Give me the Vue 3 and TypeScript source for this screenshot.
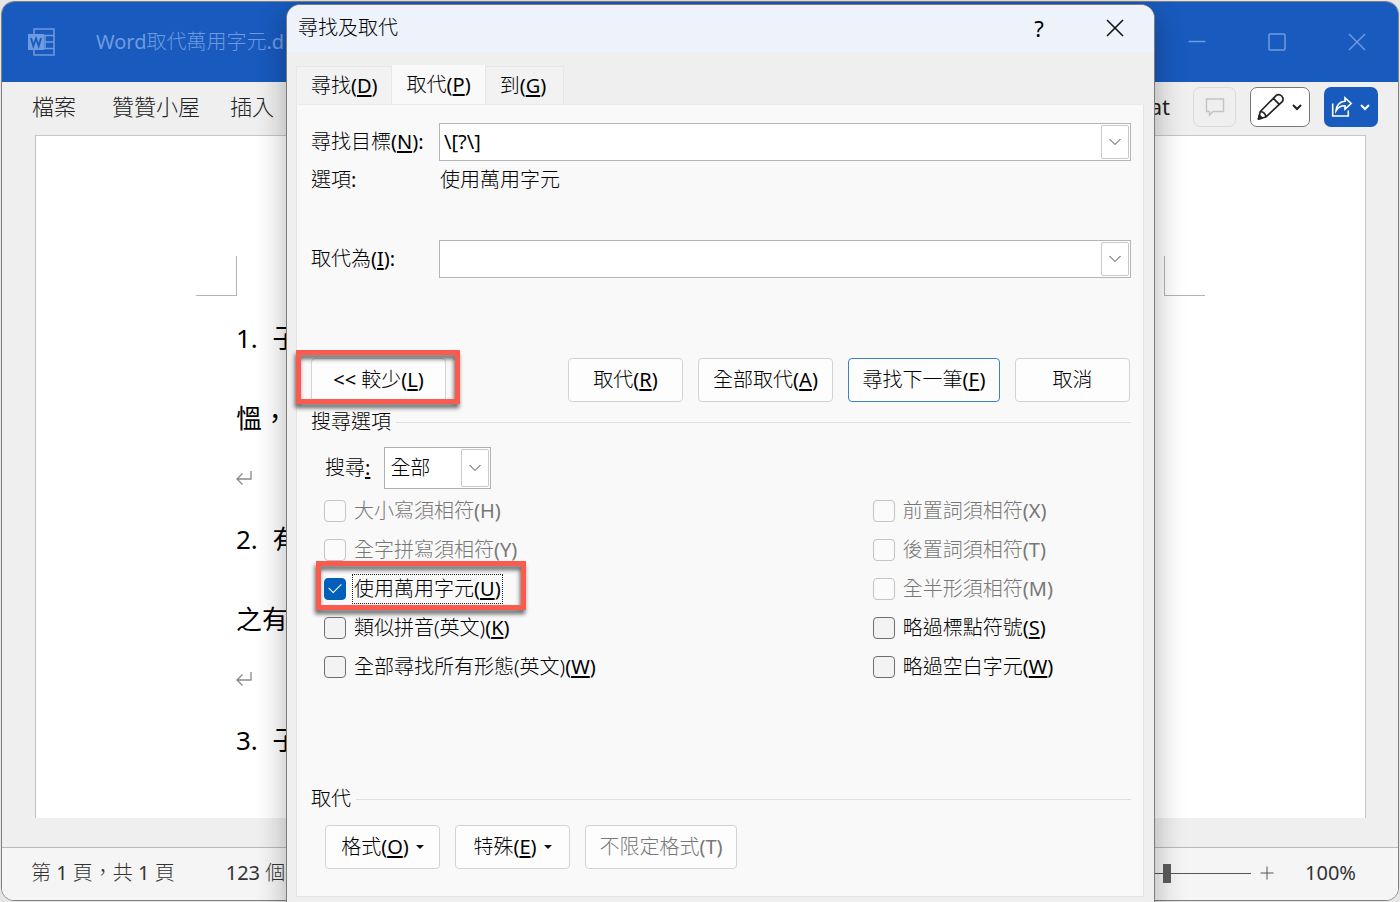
<script setup lang="ts">
import { ref } from 'vue'

interface CheckOption {
  id: string
  text: string
  key: string
  disabled?: boolean
  focused?: boolean
}

const menuTabs: string[] = ['檔案', '贊贊小屋', '插入']
const paragraphs: { lines: string[] }[] = [
  { lines: ['1. 子', '慍，'] },
  { lines: ['2. 有', '之有'] },
  { lines: ['3. 子'] },
]

const tabs = [
  { text: '尋找', key: 'D' },
  { text: '取代', key: 'P' },
  { text: '到', key: 'G' },
]
const activeTab = ref('P')

const findText = ref('\\[?\\]')
const replaceText = ref('')
const direction = ref('全部')
const zoomLevel = ref(50)
const checked = ref<string[]>(['wildcards'])

const leftOptions: CheckOption[] = [
  { id: 'case', text: '大小寫須相符', key: 'H', disabled: true },
  { id: 'whole', text: '全字拼寫須相符', key: 'Y', disabled: true },
  { id: 'wildcards', text: '使用萬用字元', key: 'U', focused: true },
  { id: 'sounds', text: '類似拼音(英文)', key: 'K' },
  { id: 'forms', text: '全部尋找所有形態(英文)', key: 'W' },
]
const rightOptions: CheckOption[] = [
  { id: 'prefix', text: '前置詞須相符', key: 'X', disabled: true },
  { id: 'suffix', text: '後置詞須相符', key: 'T', disabled: true },
  { id: 'width', text: '全半形須相符', key: 'M', disabled: true },
  { id: 'punct', text: '略過標點符號', key: 'S' },
  { id: 'space', text: '略過空白字元', key: 'W' },
]
const columns = [leftOptions, rightOptions]
</script>

<template>
  <div class="desktop">
    <div class="word">
      <header class="titlebar">
        <svg class="word-logo" viewBox="0 0 28 28" width="28" height="28" aria-hidden="true">
          <path d="M6 7V1h20v26H6v-6M6 1v6M17 7.500h9M17 14h9M17 20.500h9M7 7.500h10v13H7" fill="none" stroke="#6f9ae0" stroke-width="1.500" />
          <rect x="0" y="6" width="16" height="16" fill="#6f9ae0" />
          <path d="M3 10l2.300 8L8 10.500l2.700 7.500L13 10" fill="none" stroke="#185abd" stroke-width="1.800" />
        </svg>
        <span class="doc-name"><span class="latin">Word</span>取代萬用字元<span class="latin">.d</span></span>
        <div class="window-buttons">
          <button type="button" aria-label="最小化">
            <svg viewBox="0 0 18 18" width="18" height="18"><path d="M0.500 8.500h17" /></svg>
          </button>
          <button type="button" aria-label="最大化">
            <svg viewBox="0 0 18 18" width="18" height="18"><rect x="1" y="1" width="16" height="16" rx="1" /></svg>
          </button>
          <button type="button" aria-label="關閉">
            <svg viewBox="0 0 18 18" width="18" height="18"><path d="M1 1l16 16M17 1L1 17" /></svg>
          </button>
        </div>
      </header>

      <nav class="ribbon">
        <a v-for="tab in menuTabs" :key="tab" href="#" class="menu">{{ tab }}</a>
        <a href="#" class="menu last latin">at</a>
        <button type="button" class="tool comment" aria-label="註解" disabled>
          <svg viewBox="0 0 20 20" width="20" height="20"><path d="M1.500 2h17v12.500H8L4.500 18v-3.500h-3z" fill="none" stroke="#c4c4c4" stroke-width="1.500" /></svg>
        </button>
        <button type="button" class="tool edit" aria-label="編輯">
          <svg viewBox="0 0 28 30" width="28" height="30" fill="none" stroke="#222" stroke-width="1.700" stroke-linejoin="round" stroke-linecap="round">
            <path d="M1.500 27l1.800-7.500L19.300 3.300a4.500 4.500 0 0 1 6.200 6L9 25zM16.300 6.300l6 6M3.300 19.500c3 .3 5.200 2.300 5.700 5.500" />
            <path d="M1.500 27l.9-3.600 2.600 2.700z" fill="#222" />
          </svg>
          <svg viewBox="0 0 12 12" width="12" height="12" class="caret"><path d="M2 4l4 4 4-4" fill="none" stroke="#222" stroke-width="2" /></svg>
        </button>
        <button type="button" class="tool share" aria-label="共用">
          <svg viewBox="0 0 22 24" width="22" height="24" fill="none" stroke="#fff" stroke-width="1.600">
            <path d="M1.700 8.500V21h15.600v-5.500M14 2.800l6.200 5.700-6.200 5.700v-3.400c-4.200-.2-7 1.700-9 5 .2-5.200 3.500-9.300 9-9.500z" />
          </svg>
          <svg viewBox="0 0 12 12" width="12" height="12" class="caret"><path d="M2 4l4 4 4-4" fill="none" stroke="#fff" stroke-width="2" /></svg>
        </button>
      </nav>

      <main class="sheet">
        <div class="corners"><i class="corner left"></i><i class="corner right"></i></div>
        <template v-for="(para, i) in paragraphs" :key="i">
          <p v-for="line in para.lines" :key="line" class="line">{{ line }}</p>
          <p v-if="i < paragraphs.length - 1" class="mark">
            <svg viewBox="0 0 16 16" width="16" height="16"><path d="M15 1v8H1M6.500 3.500L1 9l5.500 5.500" fill="none" stroke="#8a8a8a" stroke-width="1.300" /></svg>
          </p>
        </template>
      </main>

      <footer class="status">
        <span class="pages">第 <span class="latin">1</span> 頁，共 <span class="latin">1</span> 頁</span>
        <span class="words"><span class="latin">123</span> 個</span>
        <input v-model="zoomLevel" class="zoom" type="range" min="0" max="100" aria-label="縮放" />
        <button type="button" class="plus" aria-label="放大">
          <svg viewBox="0 0 14 14" width="14" height="14"><path d="M7 0.500v13M0.500 7h13" stroke="#555" stroke-width="1" /></svg>
        </button>
        <span class="percent latin">100%</span>
      </footer>
    </div>

    <section class="dialog" role="dialog" aria-labelledby="dialog-title">
      <header class="dialog-head">
        <h1 id="dialog-title">尋找及取代</h1>
        <button type="button" class="help" aria-label="說明">?</button>
        <button type="button" class="close" aria-label="關閉對話方塊">
          <svg viewBox="0 0 18 18" width="18" height="18"><path d="M1 1l16 16M17 1L1 17" stroke="#111" stroke-width="1.600" /></svg>
        </button>
      </header>

      <div class="tabs" role="tablist">
        <button v-for="tab in tabs" :key="tab.key" type="button" role="tab" class="tab" :class="{ active: activeTab === tab.key }" :aria-selected="activeTab === tab.key" @click="activeTab = tab.key">
          {{ tab.text }}<span class="latin">(<u>{{ tab.key }}</u>)</span>
        </button>
      </div>

      <div class="panel">
        <div class="field">
          <label for="find">尋找目標<span class="latin">(<u>N</u>):</span></label>
          <div class="combo">
            <input id="find" v-model="findText" type="text" class="latin" />
            <button type="button" aria-label="尋找記錄"><svg viewBox="0 0 12 8" width="12" height="8"><path d="M0.500 1L6 6.500 11.500 1" /></svg></button>
          </div>
        </div>
        <div class="field">
          <span>選項<span class="latin">:</span></span>
          <span class="value">使用萬用字元</span>
        </div>
        <div class="field replace">
          <label for="replace">取代為<span class="latin">(<u>I</u>):</span></label>
          <div class="combo">
            <input id="replace" v-model="replaceText" type="text" class="latin" />
            <button type="button" aria-label="取代記錄"><svg viewBox="0 0 12 8" width="12" height="8"><path d="M0.500 1L6 6.500 11.500 1" /></svg></button>
          </div>
        </div>

        <div class="actions">
          <div class="less">
            <button type="button" class="btn mid"><span class="latin">&lt;&lt; </span>較少<span class="latin">(<u>L</u>)</span></button>
            <i class="callout"></i>
          </div>
          <button type="button" class="btn small">取代<span class="latin">(<u>R</u>)</span></button>
          <button type="button" class="btn mid">全部取代<span class="latin">(<u>A</u>)</span></button>
          <button type="button" class="btn wide primary">尋找下一筆<span class="latin">(<u>F</u>)</span></button>
          <button type="button" class="btn small">取消</button>
        </div>

        <h2 class="group">搜尋選項</h2>
        <div class="direction">
          <label for="direction">搜尋<u class="latin">:</u></label>
          <div class="picker">
            <select id="direction" v-model="direction">
              <option>全部</option>
            </select>
            <span class="drop"><svg viewBox="0 0 12 8" width="12" height="8"><path d="M0.500 1L6 6.500 11.500 1" /></svg></span>
          </div>
        </div>

        <div class="checks">
          <div v-for="(column, c) in columns" :key="c">
            <div v-for="option in column" :key="option.id" class="check" :class="{ off: option.disabled }">
              <input :id="option.id" v-model="checked" type="checkbox" :value="option.id" :disabled="option.disabled" />
              <label :for="option.id" :class="{ focused: option.focused }">{{ option.text }}<span class="latin">(<span :class="{ key: !option.disabled }">{{ option.key }}</span>)</span></label>
              <i v-if="option.focused" class="callout"></i>
            </div>
          </div>
        </div>

        <h2 class="group bottom">取代</h2>
        <div class="formats">
          <button type="button" class="btn small">格式<span class="latin">(<u>O</u>)</span><i class="tri"></i></button>
          <button type="button" class="btn small">特殊<span class="latin">(<u>E</u>)</span><i class="tri"></i></button>
          <button type="button" class="btn wide" disabled>不限定格式<span class="latin">(T)</span></button>
        </div>
      </div>
    </section>
  </div>
</template>

<style>
body {
  margin: 0;
  background: #e6e6e6;
}
</style>

<style scoped>
* {
  box-sizing: border-box;
}

.desktop {
  position: relative;
  height: 100vh;
  padding: 1px;
  overflow: hidden;
  font: 300 20px/26px "Noto Sans", "Noto Sans CJK TC", sans-serif;
  color: #000;
}

button,
input,
select {
  font: inherit;
  color: inherit;
  margin: 0;
}

button {
  display: flex;
  align-items: center;
  justify-content: center;
  padding: 0;
  border: 0;
  background: none;
  white-space: pre;
}

h1,
h2,
p {
  margin: 0;
  font: inherit;
}

.latin,
input.latin {
  font-weight: 400;
}

u,
.key {
  text-decoration: underline;
  text-decoration-thickness: 2px;
  text-underline-offset: 2px;
}

.word {
  display: flex;
  flex-direction: column;
  height: 100%;
  border: 1px solid #808080;
  border-radius: 13px;
  background: #efefef;
  overflow: hidden;
}

.titlebar {
  display: flex;
  align-items: center;
  height: 80px;
  padding-left: 26px;
  background: #185abd;
  color: #6f9ae0;
}

.doc-name {
  margin-left: 40px;
}

.window-buttons {
  display: flex;
  margin-left: auto;
  padding-right: 1px;
}

.window-buttons button {
  width: 80px;
  height: 80px;
}

.window-buttons svg {
  fill: none;
  stroke: #6f9ae0;
  stroke-width: 1.500;
}

.ribbon {
  display: flex;
  align-items: center;
  height: 53px;
  padding: 0 20px 3px 30px;
}

.menu {
  margin-right: 36px;
  padding-bottom: 2px;
  font-size: 22px;
  color: #222;
  text-decoration: none;
}

.menu + .menu {
  margin-right: 30px;
}

.menu.last {
  margin: 0 23px 0 auto;
}

.tool {
  height: 40px;
  border-radius: 7px;
}

.tool .caret {
  margin-left: 6px;
}

.comment {
  width: 43px;
  border: 1px solid #dadada;
}

.edit {
  width: 60px;
  margin: 0 14px;
  border: 1px solid #777;
  background: #fff;
}

.share {
  width: 54px;
  background: #185abd;
}

.sheet {
  flex: 1;
  margin: 0 32px 0 33px;
  padding: 120px 160px 0;
  border: solid #c6c6c6;
  border-width: 1px 1px 0;
  background: #fff;
  overflow: hidden;
}

.corners {
  display: flex;
  justify-content: space-between;
  height: 42px;
}

.corner {
  width: 41px;
  height: 40px;
  border: 0 solid #b4b4b4;
  border-bottom-width: 1px;
}

.corner.left {
  border-right-width: 1px;
}

.corner.right {
  border-left-width: 1px;
}

.line {
  padding-left: 40px;
  font-size: 26px;
  line-height: 80px;
  font-weight: 400;
  white-space: pre;
  word-spacing: 8px;
}

.mark {
  display: flex;
  align-items: center;
  height: 41px;
  padding: 0 0 2px 40px;
}

.status {
  display: flex;
  align-items: center;
  height: 53px;
  margin-top: 29px;
  padding: 0 42px 2px 29px;
  border-top: 1px solid #b9b9b9;
  background: #f5f5f5;
  color: #333;
}

.words {
  margin-left: 51px;
}

.zoom {
  width: 168px;
  height: 20px;
  margin: 0 9px 0 auto;
  appearance: none;
  background: linear-gradient(#555, #555) center / 100% 1px no-repeat;
}

.zoom::-webkit-slider-thumb {
  appearance: none;
  width: 8px;
  height: 19px;
  background: #5c5c5c;
}

.plus {
  width: 14px;
  height: 14px;
}

.percent {
  margin-left: 31px;
}

.dialog {
  position: absolute;
  top: 4px;
  left: 286px;
  right: 245px;
  padding: 0 10px 24px 9px;
  border: 1px solid #7c7c7c;
  border-radius: 14px;
  background: #efefef;
  box-shadow: 0 10px 30px rgba(0, 0, 0, 0.3);
}

.dialog-head {
  display: flex;
  align-items: center;
  height: 47px;
  margin: 0 -10px 0 -9px;
  padding: 0 20px 2px 11px;
  border-radius: 13px 13px 0 0;
  background: #eef3fb;
}

.dialog-head h1 {
  margin-right: auto;
}

.dialog-head button {
  width: 38px;
  height: 38px;
}

.help {
  margin-right: 38px;
  font-size: 22px;
  font-weight: 400;
}

.tabs {
  display: flex;
  align-items: flex-end;
  height: 52px;
}

.tab {
  height: 38px;
  padding: 0 13px 0 14px;
  border: 1px solid #e6e6e6;
  border-bottom: 0;
  background: #f2f2f2;
}

.tab.active {
  height: 39px;
  border-color: #f9f9f9;
  background: #f9f9f9;
}

.tab:last-child {
  padding-right: 17px;
}

.panel {
  padding: 18px 12px 27px 14px;
  border: 1px solid #e5e5e5;
  border-top-color: #ebebeb;
  background: #f9f9f9;
}

.field {
  display: grid;
  grid-template-columns: 128px 1fr;
  align-items: center;
  height: 38px;
}

.value {
  padding-left: 1px;
}

.replace {
  margin-top: 41px;
}

.combo {
  display: flex;
  height: 38px;
  padding: 1px;
  border: 1px solid #b5b5b8;
  background: #fff;
}

.combo input {
  flex: 1;
  min-width: 0;
  padding: 0 3px;
  border: 0;
  outline: 0;
  background: none;
}

.combo button,
.drop {
  display: flex;
  align-items: center;
  justify-content: center;
  width: 28px;
  border: 1px solid #c9c9cc;
  border-radius: 2px;
  background: #fff;
}

.combo svg,
.drop svg {
  fill: none;
  stroke: #444;
}

.actions {
  display: flex;
  gap: 15px;
  margin-top: 80px;
  padding-right: 1px;
}

.less {
  position: relative;
  margin-right: auto;
}

.callout {
  position: absolute;
  inset: -8px -14px -2px -15px;
  border: 5px solid #fb5b4e;
  filter: drop-shadow(-1px 4px 2px rgba(0, 0, 0, 0.6));
  pointer-events: none;
}

.btn {
  height: 44px;
  border: 1px solid #d3d3d3;
  border-radius: 4px;
  background: #fdfdfd;
}

.btn:disabled {
  color: #777;
}

.small {
  width: 115px;
}

.mid {
  width: 135px;
}

.wide {
  width: 152px;
}

.primary {
  border-color: #3b82c9;
}

.group {
  display: flex;
  align-items: center;
  gap: 5px;
  height: 40px;
}

.group::after {
  content: "";
  flex: 1;
  height: 1px;
  background: #e0e0e0;
}

.direction {
  display: flex;
  align-items: center;
  gap: 14px;
  margin: 5px 0 2px 14px;
}

.picker {
  display: grid;
  width: 107px;
  height: 42px;
  border: 1px solid #b0b0b6;
  background: #fff;
}

.picker select {
  grid-area: 1 / 1;
  padding: 0 5px;
  border: 0;
  appearance: none;
  background: none;
}

.drop {
  grid-area: 1 / 1;
  justify-self: end;
  margin: 1px;
  pointer-events: none;
}

.checks {
  display: grid;
  grid-template-columns: 17fr 8fr;
  padding-left: 13px;
}

.check {
  position: relative;
  display: flex;
  align-items: center;
  width: max-content;
  height: 39px;
}

.check input {
  display: grid;
  place-items: center;
  width: 22px;
  height: 22px;
  margin-right: 8px;
  border: 1px solid #6e6e6e;
  border-radius: 4px;
  background: #f3f3f3;
  appearance: none;
}

.check.off input {
  border-color: #c4c4c4;
  background: #fbfbfb;
}

.check.off {
  color: #777;
}

.check input:checked {
  border-color: #005fb8;
  background: #005fb8;
}

.check input:checked::before {
  content: "";
  width: 11px;
  height: 6px;
  margin-bottom: 4px;
  border: solid #fff;
  border-width: 0 0 1px 1px;
  transform: rotate(-45deg);
}

.focused {
  outline: 1px dotted #222;
  outline-offset: 1px;
}

.check .callout {
  inset: -8px -25px -2px -8px;
}

.bottom {
  margin-top: 93px;
}

.formats {
  display: flex;
  gap: 15px;
  margin: 6px 0 0 14px;
}

.tri {
  margin-left: 7px;
  border: 4px solid transparent;
  border-top: 4px solid #111;
  border-bottom: 0;
}
</style>
